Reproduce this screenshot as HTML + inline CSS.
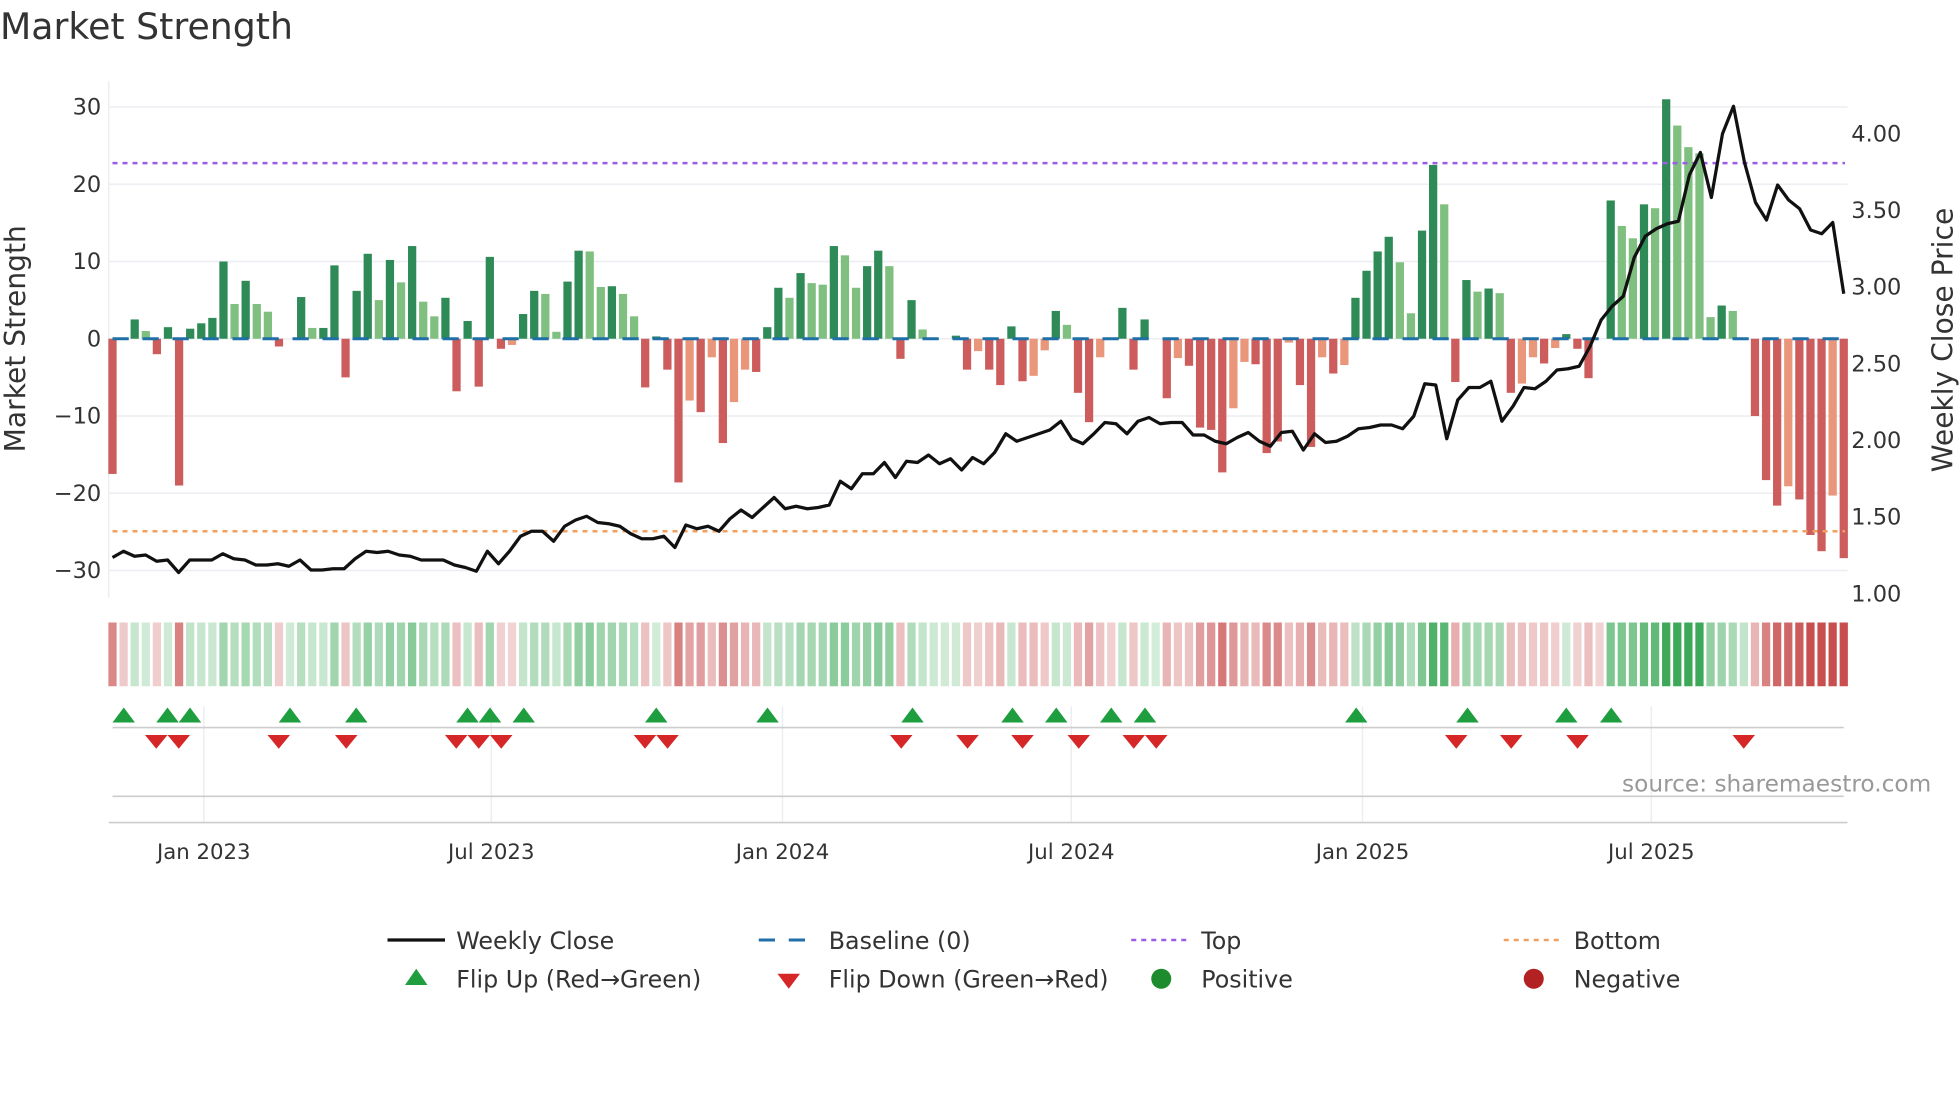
<!DOCTYPE html>
<html><head><meta charset="utf-8"><style>
html,body{margin:0;padding:0;background:#fff;}
svg{display:block;font-family:"DejaVu Sans","Liberation Sans",sans-serif;}
</style></head><body>
<svg id="s" width="1960" height="1102" viewBox="0 0 1568 881.6" xmlns="http://www.w3.org/2000/svg">
<rect width="1568" height="882" fill="#fff"/>
<text x="0" y="31" font-size="29" fill="#333">Market Strength</text>
<g id="grid" stroke="#eceef3" stroke-width="1.2"></g>
<line x1="87" y1="65" x2="87" y2="478" stroke="#eceef3" stroke-width="1.2"/>
<g id="bars"></g>
<line x1="90" y1="271" x2="1478" y2="271" stroke="#1f6fa8" stroke-width="2.4" stroke-dasharray="13,11"/>
<line x1="90" y1="130.5" x2="1476" y2="130.5" stroke="#9b5de5" stroke-width="2" stroke-dasharray="4,4"/>
<line x1="90" y1="425" x2="1476" y2="425" stroke="#f0a060" stroke-width="2" stroke-dasharray="4,4"/>
<polyline id="price" fill="none" stroke="#111" stroke-width="2.6" stroke-linejoin="round"/>
<g id="ylab" font-size="18" fill="#333"></g>
<text transform="translate(20,271) rotate(-90)" text-anchor="middle" font-size="22.5" fill="#333">Market Strength</text>
<text transform="translate(1562,272) rotate(-90)" text-anchor="middle" font-size="22.5" fill="#333">Weekly Close Price</text>
<g id="heat"></g>
<g stroke="#eceef3" stroke-width="1.2">
<line x1="163" y1="565" x2="163" y2="658"/><line x1="393" y1="565" x2="393" y2="658"/><line x1="626" y1="565" x2="626" y2="658"/><line x1="857" y1="565" x2="857" y2="658"/><line x1="1090" y1="565" x2="1090" y2="658"/><line x1="1321" y1="565" x2="1321" y2="658"/>
</g>
<line x1="90" y1="582" x2="1475" y2="582" stroke="#ccc" stroke-width="1.3"/>
<line x1="90" y1="637" x2="1475" y2="637" stroke="#ccc" stroke-width="1.3"/>
<line x1="87" y1="658" x2="1478" y2="658" stroke="#ccc" stroke-width="1.3"/>
<g id="mk"></g>
<text x="1545" y="633" text-anchor="end" font-size="18.6" fill="#999">source: sharemaestro.com</text>
<g font-size="17" fill="#333" text-anchor="middle">
<text x="163" y="687">Jan 2023</text><text x="393" y="687">Jul 2023</text><text x="626" y="687">Jan 2024</text><text x="857" y="687">Jul 2024</text><text x="1090" y="687">Jan 2025</text><text x="1321" y="687">Jul 2025</text>
</g>
<g font-size="19" fill="#333">
<line x1="310" y1="752" x2="356" y2="752" stroke="#111" stroke-width="2.6"/><text x="365" y="759">Weekly Close</text>
<line x1="607" y1="752" x2="651" y2="752" stroke="#1f6fa8" stroke-width="2.4" stroke-dasharray="13,11"/><text x="663" y="759">Baseline (0)</text>
<line x1="905" y1="752" x2="949" y2="752" stroke="#9b5de5" stroke-width="2" stroke-dasharray="4,4"/><text x="961" y="759">Top</text>
<line x1="1203" y1="752" x2="1247" y2="752" stroke="#f0a060" stroke-width="2" stroke-dasharray="4,4"/><text x="1259" y="759">Bottom</text>
<polygon points="324,788 342,788 333,775" fill="#1e9e3e"/><text x="365" y="790">Flip Up (Red→Green)</text>
<polygon points="622,779 640,779 631,791" fill="#d62728"/><text x="663" y="790">Flip Down (Green→Red)</text>
<circle cx="929" cy="783" r="8" fill="#1e8c2e"/><text x="961" y="790">Positive</text>
<circle cx="1227" cy="783" r="8" fill="#b22222"/><text x="1259" y="790">Negative</text>
</g>
</svg>
<script>
var NS="http://www.w3.org/2000/svg";
function el(p,t,a){var e=document.createElementNS(NS,t);for(var k in a)e.setAttribute(k,a[k]);document.getElementById(p).appendChild(e);return e;}
for(var v=30;v>=-30;v-=10){var y=271-v*6.18;el('grid','line',{x1:87,y1:y,x2:1478,y2:y});
var t=el('ylab','text',{x:81,y:y+6,'text-anchor':'end'});t.textContent=(v<0?'\u2212'+(-v):v);}
var pl=['4.00','3.50','3.00','2.50','2.00','1.50','1.00'];
for(var i=0;i<7;i++){var y=107+i*61.35;var t=el('ylab','text',{x:1481,y:y+6});t.textContent=pl[i];}
var B=[[-17.5,'r'],[0,'d'],[2.5,'d'],[1,'l'],[-2,'r'],[1.5,'d'],[-19,'r'],[1.3,'d'],[2,'d'],[2.7,'d'],[10,'d'],[4.5,'l'],[7.5,'d'],[4.5,'l'],[3.5,'l'],[-1,'r'],[0,'d'],[5.4,'d'],[1.4,'l'],[1.4,'d'],[9.5,'d'],[-5,'r'],[6.2,'d'],[11,'d'],[5,'l'],[10.2,'d'],[7.3,'l'],[12,'d'],[4.8,'l'],[2.9,'l'],[5.3,'d'],[-6.8,'r'],[2.3,'d'],[-6.2,'r'],[10.6,'d'],[-1.3,'r'],[-0.8,'o'],[3.2,'d'],[6.2,'d'],[5.8,'l'],[0.9,'l'],[7.4,'d'],[11.4,'d'],[11.3,'l'],[6.7,'l'],[6.8,'d'],[5.8,'l'],[2.9,'l'],[-6.3,'r'],[0.3,'d'],[-4,'r'],[-18.6,'r'],[-8,'o'],[-9.5,'r'],[-2.4,'o'],[-13.5,'r'],[-8.2,'o'],[-4,'o'],[-4.3,'r'],[1.5,'d'],[6.6,'d'],[5.3,'l'],[8.5,'d'],[7.2,'l'],[7,'l'],[12,'d'],[10.8,'l'],[6.6,'l'],[9.4,'d'],[11.4,'d'],[9.4,'l'],[-2.6,'r'],[5,'d'],[1.2,'l'],[0,'d'],[0,'d'],[0.4,'d'],[-4,'r'],[-1.6,'o'],[-4,'r'],[-6,'r'],[1.6,'d'],[-5.5,'r'],[-4.8,'o'],[-1.5,'o'],[3.6,'d'],[1.8,'l'],[-7,'r'],[-10.8,'r'],[-2.4,'o'],[0,'d'],[4,'d'],[-4,'r'],[2.5,'d'],[0,'d'],[-7.7,'r'],[-2.5,'o'],[-3.5,'r'],[-11.5,'r'],[-11.8,'r'],[-17.3,'r'],[-9,'o'],[-3,'o'],[-3.3,'r'],[-14.8,'r'],[-13.3,'r'],[-0.5,'o'],[-6,'r'],[-14,'r'],[-2.4,'o'],[-4.5,'r'],[-3.4,'o'],[5.3,'d'],[8.8,'d'],[11.3,'d'],[13.2,'d'],[9.9,'l'],[3.3,'l'],[14,'d'],[22.5,'d'],[17.4,'l'],[-5.6,'r'],[7.6,'d'],[6.1,'l'],[6.5,'d'],[5.9,'l'],[-7,'r'],[-5.8,'o'],[-2.4,'o'],[-3.2,'r'],[-1.2,'o'],[0.6,'d'],[-1.3,'r'],[-5.1,'r'],[0,'d'],[17.9,'d'],[14.6,'l'],[13,'l'],[17.4,'d'],[16.9,'l'],[31,'d'],[27.6,'l'],[24.8,'l'],[24,'l'],[2.8,'l'],[4.3,'d'],[3.6,'l'],[0,'d'],[-10,'r'],[-18.3,'r'],[-21.6,'r'],[-19.1,'o'],[-20.8,'r'],[-25.4,'r'],[-27.5,'r'],[-20.3,'o'],[-28.4,'r']];
var C={d:'#2e8b57',l:'#7fbf7f',r:'#cd5c5c',o:'#e9967a'};
var n=B.length,step=(1475-90)/(n-1),ema=0;
for(var i=0;i<n;i++){var x=90+i*step,v=B[i][0];
if(v!=0){var y=v>0?271-v*6.18:271;el('bars','rect',{x:x-3.3,y:y,width:6.6,height:Math.abs(v)*6.18,fill:C[B[i][1]]});}
ema=ema*0.6+v*0.4;
var sg=v!=0?v:ema;var mag=Math.abs(v)*0.5+Math.abs(ema)*0.5;
var a=Math.min(0.9,0.2+mag/30);var col=sg>=0?'rgba(40,160,70,'+a+')':'rgba(195,60,60,'+a+')';
el('heat','rect',{x:x-3.3,y:498,width:6.6,height:51,fill:col});}
var P=[446,441,445,444,449,448,458,448,448,448,443,447,448,452,452,451,453,448,456,456,455,455,447,441,442,441,444,445,448,448,448,452,454,457,441,451,441,429,425,425,433,421,416,413,418,419,421,427,431,431,429,438,420,423,421,425,415,408,414,406,398,407,405,407,406,404,385,391,379,379,370,382,369,370,364,371,367,376,366,371,362,347,353,350,347,344,337,351,355,347,338,339,347,337,334,339,338,338,348,348,353,355,350,346,353,357,346,345,360,347,354,353,349,343,342,340,340,343,333,307,308,351,320,310,310,305,337,325,310,311,305,296,295,293,277,256,245,237,206,189,183,179,177,140,122,158,107,85,130,162,176,148,160,167,184,187,178,235];
var pts=[];var st=(1475-90)/(P.length-1);for(var i=0;i<P.length;i++)pts.push((90+i*st).toFixed(1)+','+P[i]);
document.getElementById('price').setAttribute('points',pts.join(' '));
var U=[99,134,152,232,285,374,392,419,525,614,730,810,845,889,916,1085,1174,1253,1289];
var D=[125,143,223,277,365,383,401,516,534,721,774,818,863,907,925,1165,1209,1262,1395];
U.forEach(function(x){el('mk','polygon',{points:(x-9)+',578 '+(x+9)+',578 '+x+',566',fill:'#1e9e3e'});});
D.forEach(function(x){el('mk','polygon',{points:(x-9)+',588 '+(x+9)+',588 '+x+',599',fill:'#d62728'});});
</script>
</body></html>
